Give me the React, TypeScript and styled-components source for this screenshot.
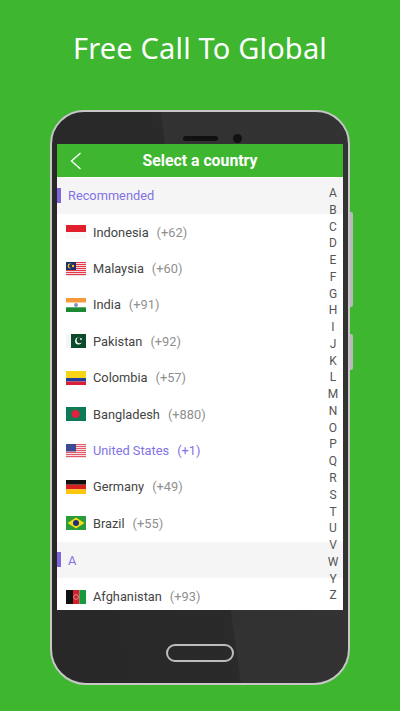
import React from "react";
import styled, { createGlobalStyle } from "styled-components";

const Global = createGlobalStyle`
  html, body { margin: 0; padding: 0; background: #3eb62f; }
  #root { width: 400px; height: 711px; overflow: hidden; }
`;

const Page = styled.div`
  width: 400px;
  height: 711px;
  background: #3eb62f;
  display: flex;
  flex-direction: column;
  align-items: center;
  font-family: Roboto, "Liberation Sans", sans-serif;
`;

const Headline = styled.h1`
  margin: 0;
  height: 110px;
  padding-top: 27px;
  box-sizing: border-box;
  font: 400 29px/42px "Noto Sans", "Open Sans", sans-serif;
  color: #fff;
  letter-spacing: 0.17px;
`;

const Phone = styled.div`
  position: relative;
  width: 300px;
  height: 575px;
  box-sizing: border-box;
  border: 2px solid #c9c6c8;
  border-radius: 34px 34px 36px 36px;
  padding: 32px 5px 0;
  background: linear-gradient(82deg, #282828 0%, #2a2a2a 50%, #323232 50.4%, #333 100%);
`;

const SideKey = styled.span<{ $top: number; $height: number }>`
  position: absolute;
  right: -5px;
  top: ${(p) => p.$top}px;
  width: 3px;
  height: ${(p) => p.$height}px;
  background: #bdb8c0;
  border-radius: 0 2px 2px 0;
`;

const Speaker = styled.span`
  position: absolute;
  top: 24px;
  left: 131px;
  width: 35px;
  height: 5px;
  border-radius: 3px;
  background: #111;
`;

const Camera = styled.span`
  position: absolute;
  top: 22px;
  left: 181px;
  width: 9px;
  height: 9px;
  border-radius: 50%;
  background: #111;
`;

const Screen = styled.div`
  position: relative;
  height: 466px;
  background: #fff;
  overflow: hidden;
`;

const TopBar = styled.header`
  position: relative;
  height: 33px;
  background: #3eb62f;
  display: flex;
  align-items: center;
  justify-content: center;
  color: #fff;
  font-size: 15.8px;
  font-weight: 700;
`;

const Back = styled.svg`
  position: absolute;
  left: 13px;
  top: 8px;
  width: 12px;
  height: 18px;
`;

const SectionHead = styled.div`
  position: relative;
  height: 36.4px;
  margin-top: 0.6px;
  background: #f5f5f6;
  display: flex;
  align-items: center;
  padding-left: 11px;
  color: #8272e4;
  font-size: 12.8px;
  &::before {
    content: "";
    position: absolute;
    left: 0;
    top: 10px;
    width: 4px;
    height: 15px;
    background: #7b68e0;
  }
`;

const Row = styled.div<{ $active?: boolean }>`
  height: 36.4px;
  display: flex;
  align-items: center;
  padding-left: 9px;
  font-size: 12.8px;
  color: ${(p) => (p.$active ? "#8272e4" : "#444")};
`;

const FlagBox = styled.svg`
  width: 20px;
  height: 14px;
  margin-right: 7px;
  flex: none;
`;

const Code = styled.span<{ $active?: boolean }>`
  margin-left: 8px;
  color: ${(p) => (p.$active ? "#8272e4" : "#8f8f8f")};
`;

const IndexBar = styled.div`
  position: absolute;
  top: 41px;
  right: 4px;
  width: 12px;
  display: flex;
  flex-direction: column;
  align-items: center;
  font-size: 12px;
  line-height: 16.76px;
  color: #555;
`;

const Home = styled.div`
  width: 68px;
  height: 18px;
  margin: 34px auto 0;
  box-sizing: border-box;
  border: 2px solid #bdbdbd;
  border-radius: 9px;
`;

const stripes = (red: string, pale: string) =>
  [0, 1, 2, 3, 4, 5, 6].map((i) => (
    <React.Fragment key={i}>
      <rect y={i * 2} width="20" height="1" fill={red} />
      <rect y={i * 2 + 1} width="20" height="1" fill={pale} />
    </React.Fragment>
  ));

const flags: Record<string, React.ReactNode> = {
  id: (<><rect width="20" height="7" fill="#e0202c" /><rect y="7" width="20" height="7" fill="#f9f9f9" /></>),
  my: (<>
    {stripes("#e5394a", "#f6d9dc")}
    <rect width="10" height="8" fill="#1a2d6e" />
    <circle cx="4" cy="4" r="2.4" fill="#f5c518" />
    <circle cx="5" cy="4" r="2" fill="#1a2d6e" />
    <circle cx="7" cy="4" r="1.2" fill="#f5c518" />
  </>),
  in: (<>
    <rect width="20" height="4.7" fill="#f5993a" />
    <rect y="4.7" width="20" height="4.6" fill="#fff" />
    <rect y="9.3" width="20" height="4.7" fill="#1b8a32" />
    <circle cx="10" cy="7" r="2" fill="#8d8fc4" />
  </>),
  pk: (<>
    <rect width="20" height="14" fill="#0d4a2a" />
    <rect width="5" height="14" fill="#f4f6f8" />
    <circle cx="12.5" cy="7" r="3.4" fill="#fff" />
    <circle cx="13.6" cy="6.3" r="3" fill="#0d4a2a" />
    <circle cx="15" cy="5" r="0.9" fill="#fff" />
  </>),
  co: (<>
    <rect width="20" height="7" fill="#f8d417" />
    <rect y="7" width="20" height="3.5" fill="#1f3f9e" />
    <rect y="10.5" width="20" height="3.5" fill="#d8203a" />
  </>),
  bd: (<><rect width="20" height="14" fill="#0c7a55" /><circle cx="9.5" cy="7" r="4" fill="#e3203f" /></>),
  us: (<>
    {stripes("#e35a68", "#f6dfe2")}
    <rect width="10" height="7.5" fill="#3b4a92" />
  </>),
  de: (<>
    <rect width="20" height="4.7" fill="#111" />
    <rect y="4.7" width="20" height="4.6" fill="#d8201f" />
    <rect y="9.3" width="20" height="4.7" fill="#fbc70e" />
  </>),
  br: (<>
    <rect width="20" height="14" fill="#2a9c3a" />
    <polygon points="10,1.5 18.5,7 10,12.5 1.5,7" fill="#f6dc16" />
    <circle cx="10" cy="7" r="3" fill="#20307e" />
  </>),
  af: (<>
    <rect width="7" height="14" fill="#111" />
    <rect x="7" width="6.5" height="14" fill="#d3202a" />
    <rect x="13.5" width="6.5" height="14" fill="#169a3c" />
    <circle cx="10" cy="7" r="2.4" fill="none" stroke="#e8a0a0" strokeWidth="0.8" />
  </>),
};

const Flag = ({ code }: { code: string }) => (
  <FlagBox viewBox="0 0 20 14">{flags[code]}</FlagBox>
);

const recommended = [
  ["id", "Indonesia", "+62"],
  ["my", "Malaysia", "+60"],
  ["in", "India", "+91"],
  ["pk", "Pakistan", "+92"],
  ["co", "Colombia", "+57"],
  ["bd", "Bangladesh", "+880"],
  ["us", "United States", "+1"],
  ["de", "Germany", "+49"],
  ["br", "Brazil", "+55"],
];

const letters = "ABCDEFGHIJKLMNOPQRSTUVWYZ".split("");

const Country = ({ flag, name, code }: { flag: string; name: string; code: string }) => {
  const active = flag === "us";
  return (
    <Row $active={active}>
      <Flag code={flag} />
      <span>{name}</span>
      <Code $active={active}>({code})</Code>
    </Row>
  );
};

export default function App() {
  return (
    <>
      <Global />
      <Page>
        <Headline>Free Call To Global</Headline>
        <Phone>
          <SideKey $top={100} $height={95} />
          <SideKey $top={222} $height={36} />
          <Speaker />
          <Camera />
          <Screen>
            <TopBar>
              <Back viewBox="0 0 12 18" fill="none" stroke="#fff" strokeWidth="1.4">
                <polyline points="10.5,1 1.5,9 10.5,17" />
              </Back>
              Select a country
            </TopBar>
            <SectionHead>Recommended</SectionHead>
            {recommended.map(([f, n, c]) => (
              <Country key={f} flag={f} name={n} code={c} />
            ))}
            <SectionHead>A</SectionHead>
            <Country flag="af" name="Afghanistan" code="+93" />
            <IndexBar>
              {letters.map((l) => (
                <span key={l}>{l}</span>
              ))}
            </IndexBar>
          </Screen>
          <Home />
        </Phone>
      </Page>
    </>
  );
}
